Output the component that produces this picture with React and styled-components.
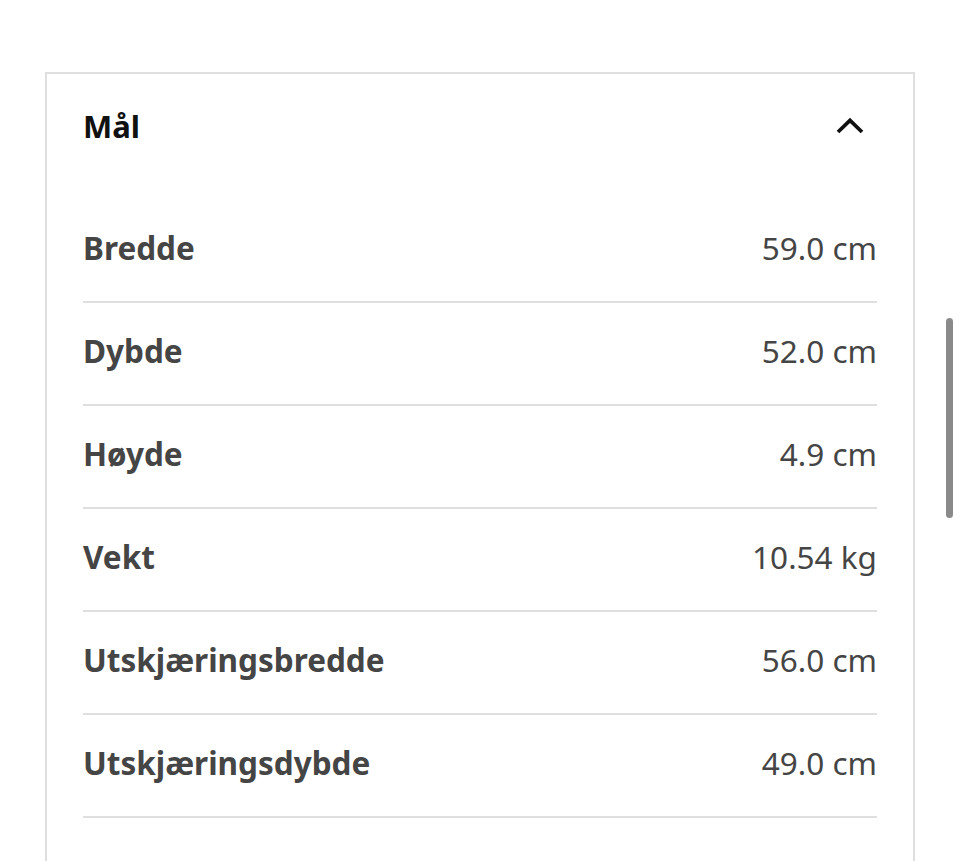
import styled, { createGlobalStyle } from "styled-components";

const GlobalStyle = createGlobalStyle`
  html, body {
    margin: 0;
    padding: 0;
    background: #fff;
    overflow: hidden;
    height: 100%;
  }
  body {
    font-family: "Noto Sans", "Open Sans", sans-serif;
  }
`;

const Page = styled.div`
  padding: 72px 45px 0 45px;
  width: 870px;
`;

const Card = styled.section`
  border: 2px solid #dfdfdf;
  border-bottom: none;
  padding: 0 36px 120px 36px;
`;

const Header = styled.div`
  display: flex;
  align-items: center;
  justify-content: space-between;
  height: 104px;
  margin-bottom: 22px;
`;

const Title = styled.h2`
  margin: 0;
  font-size: 31px;
  font-weight: 700;
  color: #111;
  line-height: 40px;
`;

const Toggle = styled.button`
  border: none;
  background: none;
  padding: 0;
  margin-right: 13px;
  display: flex;
  cursor: pointer;
`;

const Row = styled.div`
  box-sizing: border-box;
  display: flex;
  align-items: center;
  justify-content: space-between;
  height: 103px;
  padding-bottom: 6px;
  border-bottom: 2px solid #dfdfdf;
`;

const Label = styled.span`
  font-size: 31.5px;
  font-weight: 700;
  color: #454545;
`;

const Value = styled.span`
  font-size: 31.5px;
  font-weight: 400;
  color: #454545;
`;

const Scrollbar = styled.div`
  position: fixed;
  top: 318px;
  left: 946px;
  width: 7px;
  height: 200px;
  border-radius: 4px;
  background: #8a8a8a;
`;

const rows = [
  ["Bredde", "59.0 cm"],
  ["Dybde", "52.0 cm"],
  ["Høyde", "4.9 cm"],
  ["Vekt", "10.54 kg"],
  ["Utskjæringsbredde", "56.0 cm"],
  ["Utskjæringsdybde", "49.0 cm"],
];

export default function App() {
  return (
    <>
      <GlobalStyle />
      <Page>
        <Card>
          <Header>
            <Title>Mål</Title>
            <Toggle aria-label="Lukk">
              <svg width="28" height="18" viewBox="0 0 28 18">
                <path
                  d="M2 15 L14 3.5 L26 15"
                  fill="none"
                  stroke="#111"
                  strokeWidth="3.8"
                />
              </svg>
            </Toggle>
          </Header>
          {rows.map(([label, value]) => (
            <Row key={label}>
              <Label>{label}</Label>
              <Value>{value}</Value>
            </Row>
          ))}
        </Card>
      </Page>
      <Scrollbar />
    </>
  );
}
